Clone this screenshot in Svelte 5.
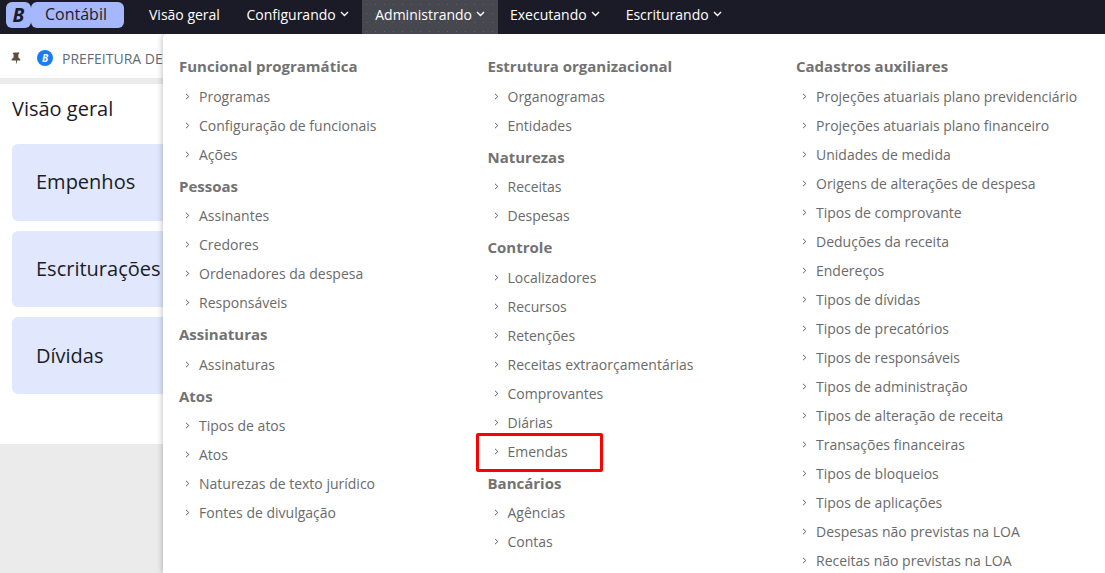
<script>
const nav = [
  { label: 'Visão geral' },
  { label: 'Configurando', caret: true },
  { label: 'Administrando', caret: true, active: true },
  { label: 'Executando', caret: true },
  { label: 'Escriturando', caret: true }
];

const columns = [
  [
    { title: 'Funcional programática', items: ['Programas', 'Configuração de funcionais', 'Ações'] },
    { title: 'Pessoas', items: ['Assinantes', 'Credores', 'Ordenadores da despesa', 'Responsáveis'] },
    { title: 'Assinaturas', items: ['Assinaturas'] },
    { title: 'Atos', items: ['Tipos de atos', 'Atos', 'Naturezas de texto jurídico', 'Fontes de divulgação'] }
  ],
  [
    { title: 'Estrutura organizacional', items: ['Organogramas', 'Entidades'] },
    { title: 'Naturezas', items: ['Receitas', 'Despesas'] },
    { title: 'Controle', items: ['Localizadores', 'Recursos', 'Retenções', 'Receitas extraorçamentárias', 'Comprovantes', 'Diárias', 'Emendas'] },
    { title: 'Bancários', items: ['Agências', 'Contas'] }
  ],
  [
    {
      title: 'Cadastros auxiliares',
      items: [
        'Projeções atuariais plano previdenciário',
        'Projeções atuariais plano financeiro',
        'Unidades de medida',
        'Origens de alterações de despesa',
        'Tipos de comprovante',
        'Deduções da receita',
        'Endereços',
        'Tipos de dívidas',
        'Tipos de precatórios',
        'Tipos de responsáveis',
        'Tipos de administração',
        'Tipos de alteração de receita',
        'Transações financeiras',
        'Tipos de bloqueios',
        'Tipos de aplicações',
        'Despesas não previstas na LOA',
        'Receitas não previstas na LOA'
      ]
    }
  ]
];

const cards = ['Empenhos', 'Escriturações', 'Dívidas'];
</script>

<div class="page">
  <header class="topbar">
    <div class="brand">
      <span class="brand-b">B</span>
      <span class="brand-name">Contábil</span>
    </div>
    <nav class="nav">
      {#each nav as n}
        <div class="nav-item" class:active={n.active}>
          {n.label}
          {#if n.caret}
            <svg class="caret" width="9" height="6" viewBox="0 0 9 6"><path d="M1 1l3.5 3.5L8 1" fill="none" stroke="currentColor" stroke-width="1.4"/></svg>
          {/if}
        </div>
      {/each}
    </nav>
  </header>

  <div class="subbar">
    <svg class="pin" width="11" height="13" viewBox="0 0 10 12"><path d="M2.5 0.5h5v1l-.8.6v3l1.8 1.7v1H5.6L5 11.5 4.4 7.8H.5v-1l1.8-1.7v-3l-.8-.6z" fill="#5b5040"/></svg>
    <span class="org-logo">B</span>
    <span class="org-name">PREFEITURA DE</span>
  </div>

  <main class="content">
    <h1>Visão geral</h1>
    <div class="cards">
      {#each cards as c}
        <div class="card">{c}</div>
      {/each}
    </div>
  </main>

  <div class="menu">
    {#each columns as col}
      <div class="col">
        {#each col as group}
          <div class="group-title">{group.title}</div>
          {#each group.items as item}
            <div class="item">
              <svg width="5" height="7" viewBox="0 0 5 7"><path d="M1 .8l2.8 2.7L1 6.2" fill="none" stroke="#5f5f5f" stroke-width="1"/></svg>
              <span>{item}</span>
            </div>
          {/each}
        {/each}
      </div>
    {/each}
  </div>

  <div class="highlight"></div>
</div>

<style>
:global(body) {
  margin: 0;
  background: #ebebeb;
  font-family: "Open Sans", sans-serif;
}
.page {
  position: relative;
  width: 1105px;
  height: 573px;
  overflow: hidden;
  background: #ebebeb;
}
.topbar {
  display: flex;
  align-items: flex-start;
  height: 34px;
  padding-left: 6px;
  background: #1b1b27;
  color: #fff;
  box-sizing: border-box;
}
.brand {
  display: flex;
  align-items: center;
  height: 26px;
  margin-top: 2px;
  width: 118px;
  color: #1b1b27;
}
.brand-b {
  display: flex;
  align-items: center;
  justify-content: center;
  flex: none;
  width: 25px;
  height: 26px;
  border-radius: 6px;
  background: #a6b8fd;
  font-weight: 700;
  font-style: italic;
  font-size: 19px;
}
.brand-name {
  display: flex;
  align-items: center;
  flex: 1;
  height: 26px;
  padding: 0 0 2px 14px;
  border-radius: 6px;
  background: #a6b8fd;
  font-size: 16px;
  box-sizing: border-box;
}
.nav {
  display: flex;
  margin-left: 12px;
}
.nav-item {
  display: flex;
  align-items: center;
  gap: 4px;
  height: 34px;
  padding: 0 13px 6px;
  box-sizing: border-box;
  font-size: 14px;
}
.nav-item:nth-child(2) {
  margin-left: 0.5px;
}
.nav-item.active {
  margin: 0 -1px 0 0.5px;
  background-color: #47474f;
  background-image: radial-gradient(circle, rgba(255, 255, 255, 0.14) 0.6px, transparent 1px);
  background-size: 9px 9px;
}
.subbar {
  display: flex;
  align-items: center;
  height: 40px;
  padding: 4px 0 0 11px;
  background: #fff;
  border-bottom: 6px solid #ebebeb;
}
.org-logo {
  display: flex;
  align-items: center;
  justify-content: center;
  width: 16px;
  height: 16px;
  margin-left: 15px;
  border-radius: 50%;
  background: #1a7cf2;
  color: #fff;
  font-size: 10px;
  font-weight: 700;
  font-style: italic;
}
.org-name {
  margin-left: 9px;
  font-size: 14px;
  color: #5f6b7a;
  white-space: nowrap;
}
.content {
  height: 360px;
  padding: 11px 12px;
  box-sizing: border-box;
  background: #fff;
}
h1 {
  margin: 0 0 22px;
  font-size: 20px;
  line-height: 27px;
  font-weight: 400;
  color: #1b1b27;
}
.cards {
  display: flex;
  flex-direction: column;
  gap: 10px;
}
.card {
  display: flex;
  align-items: center;
  height: 76.6px;
  padding: 0 0 0.8px 24px;
  box-sizing: border-box;
  border-radius: 6px;
  background: #e1e8fd;
  color: #1b1b27;
  font-size: 20px;
}
.menu {
  position: absolute;
  left: 163px;
  top: 34px;
  right: 0;
  bottom: 0;
  display: flex;
  padding: 19px 0 0 16px;
  background: #fff;
  border-top-left-radius: 4px;
  box-shadow: 0 0 6px rgba(0, 0, 0, 0.3);
  clip-path: inset(0 0 0 -10px);
}
.col {
  width: 308.5px;
  flex: none;
}
.group-title {
  height: 29.5px;
  margin-top: 3px;
  line-height: 26px;
  font-size: 15px;
  font-weight: 700;
  color: #727272;
}
.col .group-title:first-child {
  margin-top: 0;
}
.item {
  display: flex;
  align-items: center;
  gap: 9px;
  height: 29px;
  padding: 0 0 2px 6px;
  box-sizing: border-box;
  font-size: 14px;
  color: #6a6a6a;
  white-space: nowrap;
}
.highlight {
  position: absolute;
  left: 476px;
  top: 433px;
  width: 121px;
  height: 33px;
  border: 3px solid #f00;
  border-radius: 2px;
}
</style>
